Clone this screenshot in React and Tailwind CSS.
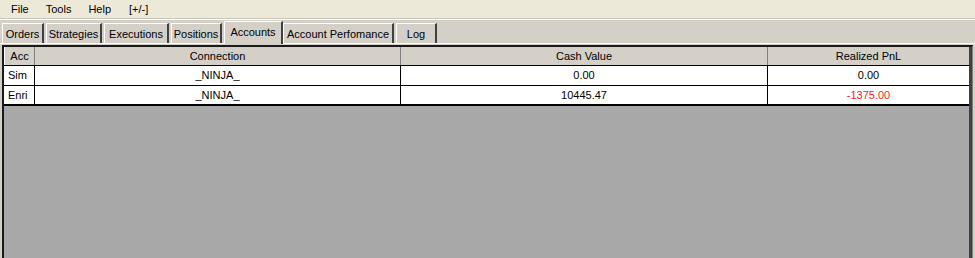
import React from 'react';

const tabs = [
  { label: 'Orders', w: 'w-[42px]' },
  { label: 'Strategies', w: 'w-[56px]' },
  { label: 'Executions', w: 'w-[65px]' },
  { label: 'Positions', w: 'w-[51px]' },
  { label: 'Accounts', w: 'w-[59px]', active: true },
  { label: 'Account Perfomance', w: 'w-[111px]' },
  { label: 'Log', w: 'w-[41px]' },
];

const rows = [
  { acc: 'Sim', conn: '_NINJA_', cash: '0.00', pnl: '0.00', neg: false },
  { acc: 'Enri', conn: '_NINJA_', cash: '10445.47', pnl: '-1375.00', neg: true },
];

const cols = 'grid grid-cols-[31px_366px_367px_201px]';

const App = () => {
  return (
    <div className="w-[975px] h-[258px] bg-[#d4d0c8] flex flex-col text-[11px] text-black overflow-hidden font-['Liberation_Sans',Arial,sans-serif]">
      {/* Menu */}
      <div className="h-[19px] bg-[#ece9d8] flex items-center gap-[17px] pl-[11px] border-b border-[#c8c5bb]">
        <span>File</span>
        <span>Tools</span>
        <span>Help</span>
        <span className="ml-[1px]">[+/-]</span>
      </div>
      <div className="h-[1px] bg-white" />

      {/* Tabs */}
      <div className="h-[24px] flex items-end pl-[2px] border-b border-white">
        {tabs.map((t) =>
          t.active ? (
            <div
              key={t.label}
              className={`${t.w} h-[23px] -mb-[1px] bg-[#d4d0c8] border-t border-l border-white border-r-2 border-r-[#404040] flex items-center justify-center pb-[2px] relative z-10`}
            >
              {t.label}
            </div>
          ) : (
            <div
              key={t.label}
              className={`${t.w} h-[20px] mr-[2px] bg-[#d4d0c8] border-t border-l border-white border-r-2 border-r-[#404040] flex items-center justify-center pt-[2px]`}
            >
              {t.label}
            </div>
          )
        )}
      </div>

      {/* Grid */}
      <div className="flex-1 mx-[2px] mt-[1px] border-l-2 border-t-2 border-[#1a1a1a] border-r border-r-[#808080] bg-[#a8a8a8] flex">
        <div className="flex-1 flex flex-col">
          <div className={`${cols} h-[19px] bg-[#d4d0c8] border-b border-black`}>
            <div className="flex items-center justify-center border-r border-[#808080] border-l border-l-white">Acc</div>
            <div className="flex items-center justify-center border-r border-[#808080]">Connection</div>
            <div className="flex items-center justify-center border-r border-[#808080]">Cash Value</div>
            <div className="flex items-center justify-center">Realized PnL</div>
          </div>
          {rows.map((r, i) => (
            <div
              key={r.acc}
              className={`${cols} bg-white border-black ${i === rows.length - 1 ? 'h-[20px] border-b-2' : 'h-[20px] border-b'}`}
            >
              <div className="flex items-center pl-[4px] border-r border-black">{r.acc}</div>
              <div className="flex items-center justify-center border-r border-black">{r.conn}</div>
              <div className="flex items-center justify-center border-r border-black">{r.cash}</div>
              <div className={`flex items-center justify-center ${r.neg ? 'text-[#ff2020]' : ''}`}>{r.pnl}</div>
            </div>
          ))}
        </div>
        <div className="w-[3px] bg-[#404040]" />
      </div>
    </div>
  );
};

export default App;
